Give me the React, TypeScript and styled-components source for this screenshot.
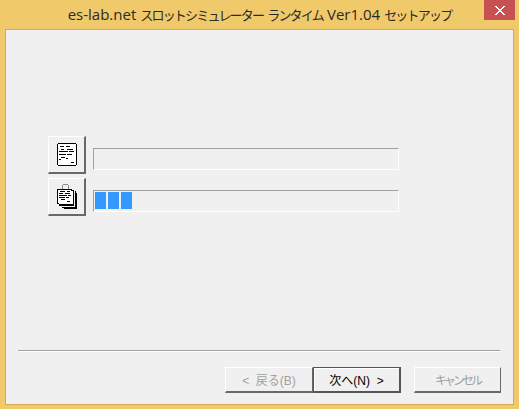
import styled, { createGlobalStyle } from "styled-components";

const GlobalStyle = createGlobalStyle`
  html, body {
    margin: 0;
    padding: 0;
    background: #f0c96b;
  }
`;

const Frame = styled.div`
  width: 519px;
  height: 409px;
  box-sizing: border-box;
  padding: 0 5px 4px 5px;
  display: flex;
  flex-direction: column;
  background: #f0c96b;
  overflow: hidden;
  font-family: "Liberation Sans", "Noto Sans CJK JP", sans-serif;
`;

const TitleBar = styled.div`
  height: 29px;
  flex: none;
  display: flex;
  align-items: center;
  justify-content: center;
  position: relative;
  padding-bottom: 1px;
  box-sizing: border-box;
`;

const Title = styled.div`
  display: flex;
  align-items: baseline;
  gap: 4px;
  font-family: "Open Sans", sans-serif;
  font-size: 15px;
  color: #2a2a2a;
  white-space: nowrap;
`;

const Kana = styled.span`
  font-family: "Noto Sans CJK JP", sans-serif;
  font-size: 13px;
  letter-spacing: -1.8px;
`;

const CloseButton = styled.div`
  position: absolute;
  top: 0;
  right: -1px;
  width: 31px;
  height: 20px;
  background: #c75050;
  display: flex;
  align-items: center;
  justify-content: center;
`;

const Panel = styled.div`
  flex: 1;
  display: flex;
  flex-direction: column;
  background: #f0f0f0;
  border: 1px solid #d3aa58;
`;

const Steps = styled.div`
  display: flex;
  flex-direction: column;
  gap: 4px;
  padding: 106px 0 0 42px;
`;

const StepRow = styled.div`
  display: flex;
  align-items: flex-end;
  gap: 7px;
`;

const IconButton = styled.div`
  width: 38px;
  height: 38px;
  box-sizing: border-box;
  display: flex;
  align-items: center;
  justify-content: center;
  background: #f0f0f0;
  border-top: 1px solid #ffffff;
  border-left: 1px solid #ffffff;
  border-right: 2px solid #696969;
  border-bottom: 2px solid #696969;
`;

const Field = styled.div`
  width: 306px;
  height: 22px;
  margin-bottom: 4px;
  box-sizing: border-box;
  display: flex;
  gap: 2px;
  padding: 1px 0 0 1px;
  border-top: 1px solid #a0a0a0;
  border-left: 1px solid #a0a0a0;
  border-right: 1px solid #ffffff;
  border-bottom: 1px solid #ffffff;
`;

const Block = styled.div`
  width: 11px;
  height: 17px;
  background: #3399ff;
`;

const Spacer = styled.div`
  flex: 1;
`;

const Separator = styled.div`
  height: 1px;
  margin: 0 13px 0 12px;
  background: #a0a0a0;
  border-bottom: 1px solid #ffffff;
`;

const Footer = styled.div`
  display: flex;
  justify-content: flex-end;
  padding: 15px 12px 11px 0;
`;

const WizardButton = styled.div<{ $disabled?: boolean; $default?: boolean; $gap?: number; $width?: number }>`
  width: ${(p) => p.$width ?? 88}px;
  height: 26px;
  box-sizing: border-box;
  margin-left: ${(p) => p.$gap ?? 0}px;
  display: flex;
  align-items: center;
  justify-content: center;
  font-size: 12px;
  white-space: pre;
  color: ${(p) => (p.$disabled ? "#a0a0a0" : "#000000")};
  background: #f0f0f0;
  ${(p) =>
    p.$default
      ? `
    border: 1px solid #555555;
    border-right-width: 2px;
    border-bottom-width: 2px;
    box-shadow: inset 1px 1px 0 #ffffff;
  `
      : `
    border-top: 1px solid #ffffff;
    border-left: 1px solid #ffffff;
    border-right: 1px solid #696969;
    border-bottom: 2px solid #696969;
  `}
`;

const TightLabel = styled.span`
  font-size: 12px;
  letter-spacing: -3px;
`;

function DocumentIcon() {
  return (
    <svg width="20" height="23" viewBox="0 0 20 23" shapeRendering="crispEdges">
      <path d="M1 0.5H18.5L19.5 1.5V21.5L18.5 22.5H1.5L0.5 21.5V1" fill="#ffffff" stroke="#000000" />
      <path
        d="M3 3.5H7M9 3.5H13M4 6.5H7M10 6.5H16M2 8.5H11M12 8.5H17M2 11.5H9M10 11.5H15M4 14.5H8M9 15.5H11M2 16.5H4M14 19.5H17"
        stroke="#000000"
      />
    </svg>
  );
}

function ClipboardIcon() {
  return (
    <svg width="21" height="25" viewBox="0 0 21 25" shapeRendering="crispEdges">
      <path d="M17.5 6V21.5H3M19.5 7V23.5H6M20.5 9V24.5H8" fill="none" stroke="#000000" />
      <path d="M1.5 5.5H15.5V19.5H1.5Z" fill="#ffffff" stroke="#000000" />
      <path d="M16 6.5H17V20.5H2.5" fill="#ffffff" stroke="#000000" />
      <path d="M6.5 5V1.5L7.5 0.5H11.5L12.5 1.5V5" fill="none" stroke="#8a8a8a" />
      <path
        d="M4 7.5H9M11 7.5H14M3 9.5H7M9 9.5H14M3 11.5H11M12 11.5H15M3 13.5H9M10 13.5H13M5 15.5H9M11 17.5H14"
        stroke="#000000"
      />
    </svg>
  );
}

export default function App() {
  return (
    <Frame>
      <GlobalStyle />
      <TitleBar>
        <Title>
          es-lab.net
          <Kana>スロットシミュレーター</Kana>
          <Kana>ランタイム</Kana>
          Ver1.04
          <Kana>セットアップ</Kana>
        </Title>
        <CloseButton>
          <svg width="10" height="9" viewBox="0 0 10 9" shapeRendering="crispEdges">
            <path d="M0 0H2V1H3V2H4V3H6V2H7V1H8V0H10V1H9V2H8V3H7V4H6V5H7V6H8V7H9V8H10V9H8V8H7V7H6V6H4V7H3V8H2V9H0V8H1V7H2V6H3V5H4V4H3V3H2V2H1V1H0Z" fill="#ffffff" />
          </svg>
        </CloseButton>
      </TitleBar>
      <Panel>
        <Steps>
          <StepRow>
            <IconButton>
              <DocumentIcon />
            </IconButton>
            <Field />
          </StepRow>
          <StepRow>
            <IconButton>
              <ClipboardIcon />
            </IconButton>
            <Field>
              <Block />
              <Block />
              <Block />
            </Field>
          </StepRow>
        </Steps>
        <Spacer />
        <Separator />
        <Footer>
          <WizardButton $disabled>{"<  戻る(B)"}</WizardButton>
          <WizardButton $default>{"次へ(N)  >"}</WizardButton>
          <WizardButton $disabled $gap={13} $width={87}>
            <TightLabel>キャンセル</TightLabel>
          </WizardButton>
        </Footer>
      </Panel>
    </Frame>
  );
}
